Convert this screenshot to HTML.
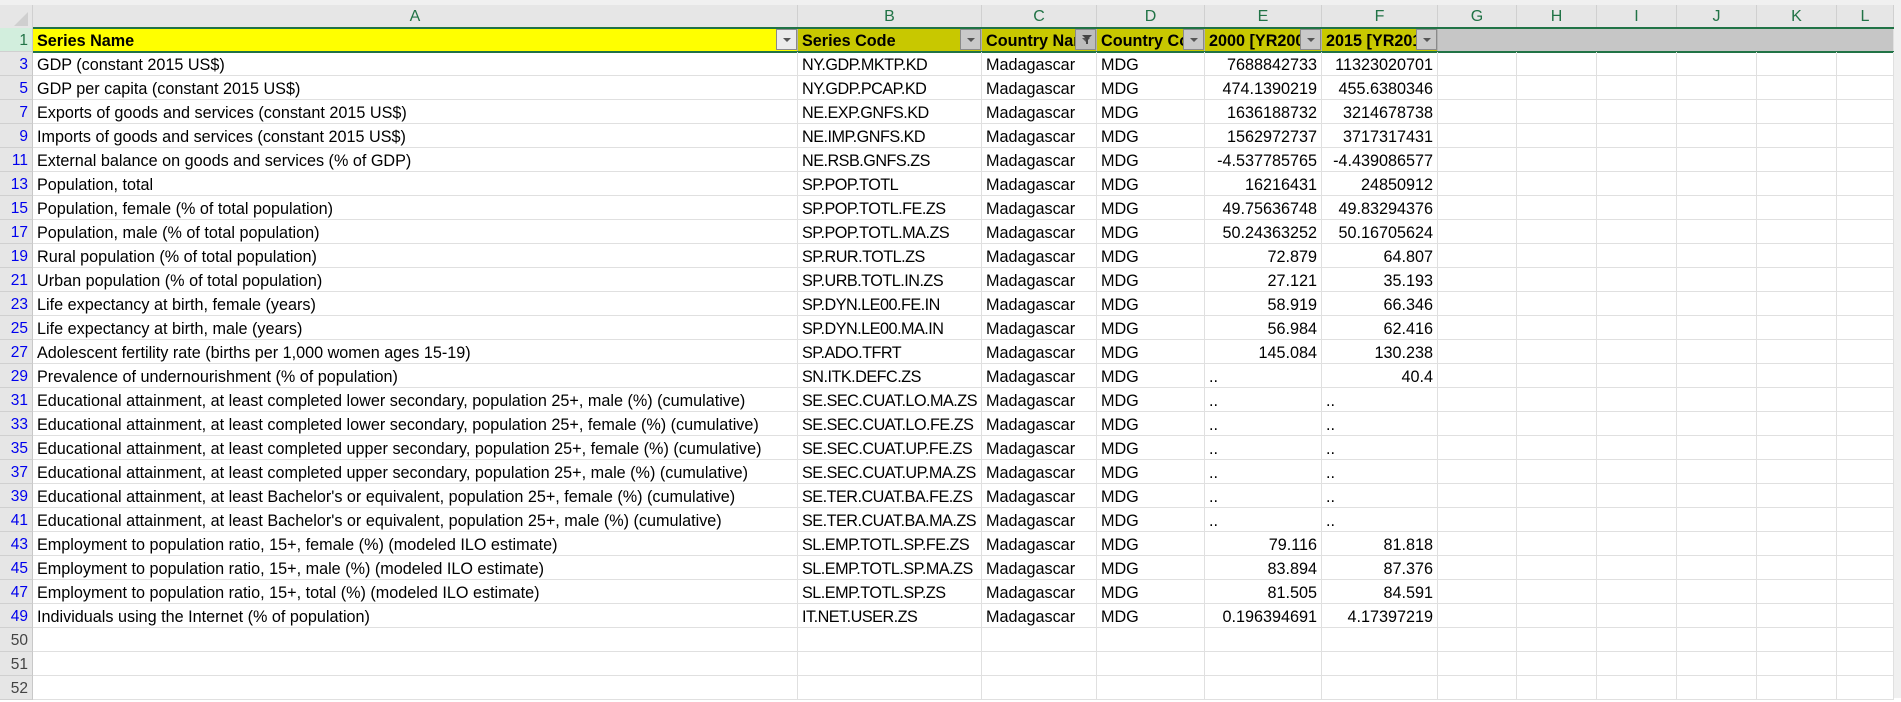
<!DOCTYPE html>
<html><head><meta charset="utf-8"><style>
*{margin:0;padding:0;box-sizing:border-box}
body{width:1901px;height:698px;overflow:hidden;background:#fff;font-family:"Liberation Sans",Arial,sans-serif;font-size:16.2px;color:#000;position:relative}
.top{position:absolute;left:0;top:0;width:1901px;height:5px;background:#f0f0f0}
.ch{position:absolute;top:5px;height:23px;background:#e6e6e6;border-right:1px solid #d0d0d0;color:#217346;font-size:16px;text-align:center;line-height:24px}
.rh{position:absolute;left:0;width:33px;height:24px;background:#e6e6e6;border-bottom:1px solid #d0d0d0;border-right:1px solid #c8c8c8;text-align:right;padding-right:4px;line-height:26px;color:#0000ee;font-size:15.5px}
.c{position:absolute;height:24px;border-right:1px solid #e0e0e0;border-bottom:1px solid #e0e0e0;line-height:26px;padding:0 4px;white-space:nowrap;overflow:hidden}
.r{text-align:right}
.b{letter-spacing:-0.5px}
.h{font-weight:bold;border-right:1px solid #b0b0b0}
.btn{position:absolute;top:29px;width:21px;height:21px;border:1px solid #8a8a8a;background:#c9c9c9}
.btn:after{content:"";position:absolute;left:6px;top:8px;border-left:4px solid transparent;border-right:4px solid transparent;border-top:4px solid #555}
.gl{position:absolute;left:33px;width:1861px;height:2px;background:#217346}
</style></head><body>
<div class="top"></div>
<div style="position:absolute;left:0;top:5px;width:33px;height:23px;background:#e6e6e6;border-right:1px solid #d0d0d0"></div>
<div style="position:absolute;left:14px;top:12px;width:0;height:0;border-left:14px solid transparent;border-bottom:14px solid #cfcfcf"></div>
<div class="ch" style="left:33px;width:765px">A</div>
<div class="ch" style="left:798px;width:184px">B</div>
<div class="ch" style="left:982px;width:115px">C</div>
<div class="ch" style="left:1097px;width:108px">D</div>
<div class="ch" style="left:1205px;width:117px">E</div>
<div class="ch" style="left:1322px;width:116px">F</div>
<div class="ch" style="left:1438px;width:79px">G</div>
<div class="ch" style="left:1517px;width:80px">H</div>
<div class="ch" style="left:1597px;width:80px">I</div>
<div class="ch" style="left:1677px;width:80px">J</div>
<div class="ch" style="left:1757px;width:80px">K</div>
<div class="ch" style="left:1837px;width:57px">L</div>
<div style="position:absolute;left:1894px;top:0;width:7px;height:698px;background:#f0f0f0"></div>

<div class="rh" style="top:28px;background:#d2eedd;color:#217346">1</div>
<div class="c h" style="left:33px;top:28px;width:765px;background:#ffff00">Series Name</div>
<div class="c h" style="left:798px;top:28px;width:184px;background:#c8c800">Series Code</div>
<div class="c h" style="left:982px;top:28px;width:115px;background:#c8c800">Country Name</div>
<div class="c h" style="left:1097px;top:28px;width:108px;background:#c8c800">Country Code</div>
<div class="c h" style="left:1205px;top:28px;width:117px;background:#c8c800">2000 [YR2000]</div>
<div class="c h" style="left:1322px;top:28px;width:116px;background:#c8c800">2015 [YR2015]</div>
<div class="c" style="left:1438px;top:28px;width:456px;background:#c6c6c6"></div>
<div class="btn" style="left:776px;background:#ebebeb"></div>
<div class="btn" style="left:960px"></div>
<div class="btn" style="left:1075px;background:#bdbdbd"></div>
<div style="position:absolute;left:1082px;top:35px;width:0;height:0;border-left:5px solid transparent;border-right:5px solid transparent;border-top:5px solid #444"></div>
<div style="position:absolute;left:1086px;top:39px;width:2px;height:5px;background:#444"></div>
<div class="btn" style="left:1183px"></div>
<div class="btn" style="left:1300px"></div>
<div class="btn" style="left:1416px"></div>
<div class="gl" style="top:27px"></div>
<div class="gl" style="top:51px"></div>

<div id="rows"></div>
<script>
var d=[
[3,"GDP (constant 2015 US$)","NY.GDP.MKTP.KD","7688842733","11323020701"],
[5,"GDP per capita (constant 2015 US$)","NY.GDP.PCAP.KD","474.1390219","455.6380346"],
[7,"Exports of goods and services (constant 2015 US$)","NE.EXP.GNFS.KD","1636188732","3214678738"],
[9,"Imports of goods and services (constant 2015 US$)","NE.IMP.GNFS.KD","1562972737","3717317431"],
[11,"External balance on goods and services (% of GDP)","NE.RSB.GNFS.ZS","-4.537785765","-4.439086577"],
[13,"Population, total","SP.POP.TOTL","16216431","24850912"],
[15,"Population, female (% of total population)","SP.POP.TOTL.FE.ZS","49.75636748","49.83294376"],
[17,"Population, male (% of total population)","SP.POP.TOTL.MA.ZS","50.24363252","50.16705624"],
[19,"Rural population (% of total population)","SP.RUR.TOTL.ZS","72.879","64.807"],
[21,"Urban population (% of total population)","SP.URB.TOTL.IN.ZS","27.121","35.193"],
[23,"Life expectancy at birth, female (years)","SP.DYN.LE00.FE.IN","58.919","66.346"],
[25,"Life expectancy at birth, male (years)","SP.DYN.LE00.MA.IN","56.984","62.416"],
[27,"Adolescent fertility rate (births per 1,000 women ages 15-19)","SP.ADO.TFRT","145.084","130.238"],
[29,"Prevalence of undernourishment (% of population)","SN.ITK.DEFC.ZS","..","40.4"],
[31,"Educational attainment, at least completed lower secondary, population 25+, male (%) (cumulative)","SE.SEC.CUAT.LO.MA.ZS","..",".."],
[33,"Educational attainment, at least completed lower secondary, population 25+, female (%) (cumulative)","SE.SEC.CUAT.LO.FE.ZS","..",".."],
[35,"Educational attainment, at least completed upper secondary, population 25+, female (%) (cumulative)","SE.SEC.CUAT.UP.FE.ZS","..",".."],
[37,"Educational attainment, at least completed upper secondary, population 25+, male (%) (cumulative)","SE.SEC.CUAT.UP.MA.ZS","..",".."],
[39,"Educational attainment, at least Bachelor's or equivalent, population 25+, female (%) (cumulative)","SE.TER.CUAT.BA.FE.ZS","..",".."],
[41,"Educational attainment, at least Bachelor's or equivalent, population 25+, male (%) (cumulative)","SE.TER.CUAT.BA.MA.ZS","..",".."],
[43,"Employment to population ratio, 15+, female (%) (modeled ILO estimate)","SL.EMP.TOTL.SP.FE.ZS","79.116","81.818"],
[45,"Employment to population ratio, 15+, male (%) (modeled ILO estimate)","SL.EMP.TOTL.SP.MA.ZS","83.894","87.376"],
[47,"Employment to population ratio, 15+, total (%) (modeled ILO estimate)","SL.EMP.TOTL.SP.ZS","81.505","84.591"],
[49,"Individuals using the Internet (% of population)","IT.NET.USER.ZS","0.196394691","4.17397219"],
[50],[51],[52]];
var cols=[[33,765],[798,184],[982,115],[1097,108],[1205,117],[1322,116],[1438,79],[1517,80],[1597,80],[1677,80],[1757,80],[1837,57]];
var h="";
d.forEach(function(r,i){
 var t=52+i*24;
 var blue=r.length>1;
 h+='<div class="rh" style="top:'+t+'px;'+(blue?'':'color:#444')+'">'+r[0]+'</div>';
 var v=blue?[r[1],r[2],"Madagascar","MDG",r[3],r[4]]:[];
 cols.forEach(function(c,j){
  var txt=v[j]||"";
  var right=(j==4||j==5)&&txt!="..";
  h+='<div class="c'+(right?' r':'')+(j==1?' b':'')+'" style="left:'+c[0]+'px;top:'+t+'px;width:'+c[1]+'px">'+txt+'</div>';
 });
});
document.getElementById("rows").innerHTML=h;
</script>
</body></html>
